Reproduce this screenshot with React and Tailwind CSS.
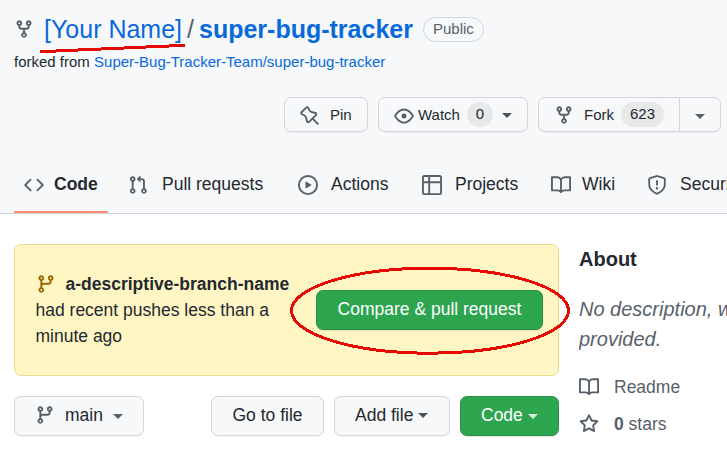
import React from 'react';

const paths = {
  fork: 'M5 3.25a.75.75 0 11-1.5 0 .75.75 0 011.5 0zm0 2.122a2.25 2.25 0 10-1.5 0v.878A2.25 2.25 0 005.75 8.5h1.5v2.128a2.251 2.251 0 101.5 0V8.5h1.5a2.25 2.25 0 002.25-2.25v-.878a2.25 2.25 0 10-1.5 0v.878a.75.75 0 01-.75.75h-4.5A.75.75 0 015 6.25v-.878zm3.75 7.378a.75.75 0 11-1.5 0 .75.75 0 011.5 0zm3-8.75a.75.75 0 100-1.5.75.75 0 000 1.5z',
  pin: 'M4.456.734a1.75 1.75 0 012.826.504l.613 1.327a3.081 3.081 0 002.084 1.707l2.454.584c1.332.317 1.8 1.972.832 2.94L11.06 10l3.72 3.72a.75.75 0 11-1.061 1.06L10 11.06l-2.204 2.205c-.968.968-2.623.5-2.94-.832l-.584-2.454a3.081 3.081 0 00-1.707-2.084l-1.327-.613a1.75 1.75 0 01-.504-2.826L4.456.734zM5.92 1.866a.25.25 0 00-.404-.072L1.794 5.516a.25.25 0 00.072.404l1.328.613A4.582 4.582 0 015.73 9.63l.584 2.454a.25.25 0 00.42.12l5.47-5.47a.25.25 0 00-.12-.42L9.63 5.73a4.581 4.581 0 01-3.098-2.537L5.92 1.866z',
  eye: 'M1.679 7.932c.412-.621 1.242-1.75 2.366-2.717C5.175 4.242 6.527 3.5 8 3.5c1.473 0 2.824.742 3.955 1.715 1.124.967 1.954 2.096 2.366 2.717a.119.119 0 010 .136c-.412.621-1.242 1.75-2.366 2.717C10.825 11.758 9.473 12.5 8 12.5c-1.473 0-2.824-.742-3.955-1.715C2.92 9.818 2.09 8.69 1.679 8.068a.119.119 0 010-.136zM8 2c-1.981 0-3.67.992-4.933 2.078C1.797 5.169.88 6.423.43 7.1a1.619 1.619 0 000 1.798c.45.678 1.367 1.932 2.637 3.024C4.329 13.008 6.019 14 8 14c1.981 0 3.67-.992 4.933-2.078 1.27-1.091 2.187-2.345 2.637-3.023a1.619 1.619 0 000-1.798c-.45-.678-1.367-1.932-2.637-3.023C11.671 2.992 9.981 2 8 2zm0 8a2 2 0 100-4 2 2 0 000 4z',
  code: 'M4.72 3.22a.75.75 0 011.06 1.06L2.06 8l3.72 3.72a.75.75 0 11-1.06 1.06L.47 8.53a.75.75 0 010-1.06l4.25-4.25zm6.56 0a.75.75 0 10-1.06 1.06L13.94 8l-3.72 3.72a.75.75 0 101.06 1.06l4.25-4.25a.75.75 0 000-1.06l-4.25-4.25z',
  pull: 'M7.177 3.073L9.573.677A.25.25 0 0110 .854v4.792a.25.25 0 01-.427.177L7.177 3.427a.25.25 0 010-.354zM3.75 2.5a.75.75 0 100 1.5.75.75 0 000-1.5zm-2.25.75a2.25 2.25 0 113 2.122v5.256a2.251 2.251 0 11-1.5 0V5.372A2.25 2.25 0 011.5 3.25zM11 2.5h-1V4h1a1 1 0 011 1v5.628a2.251 2.251 0 101.5 0V5A2.5 2.5 0 0011 2.5zm1 10.25a.75.75 0 111.5 0 .75.75 0 01-1.5 0zM3.75 12a.75.75 0 100 1.5.75.75 0 000-1.5z',
  play: 'M1.5 8a6.5 6.5 0 1113 0 6.5 6.5 0 01-13 0zM8 0a8 8 0 100 16A8 8 0 008 0zM6.379 5.227A.25.25 0 006 5.442v5.117a.25.25 0 00.379.214l4.264-2.559a.25.25 0 000-.428L6.379 5.227z',
  table: 'M0 1.75C0 .784.784 0 1.75 0h12.5C15.216 0 16 .784 16 1.75v12.5A1.75 1.75 0 0114.25 16H1.75A1.75 1.75 0 010 14.25V1.75zM1.5 6.5v7.75c0 .138.112.25.25.25H5v-8H1.5zM5 5H1.5V1.75a.25.25 0 01.25-.25H5V5zm1.5 1.5v8h7.75a.25.25 0 00.25-.25V6.5h-8zm8-1.5h-8V1.5h7.75a.25.25 0 01.25.25V5z',
  book: 'M0 1.75A.75.75 0 01.75 1h4.253c1.227 0 2.317.59 3 1.501A3.744 3.744 0 0111.006 1h4.245a.75.75 0 01.75.75v10.5a.75.75 0 01-.75.75h-4.507a2.25 2.25 0 00-1.591.659l-.622.621a.75.75 0 01-1.06 0l-.622-.621A2.25 2.25 0 005.258 13H.75a.75.75 0 01-.75-.75V1.75zm8.755 3a2.25 2.25 0 012.25-2.25H14.5v9h-3.757c-.71 0-1.4.201-1.992.572l.004-7.322zm-1.504 7.324l.004-5.073-.002-2.253A2.25 2.25 0 005.003 2.5H1.5v9h3.757a3.75 3.75 0 011.994.574z',
  shield: 'M7.467.133a1.75 1.75 0 011.066 0l5.25 1.68A1.75 1.75 0 0115 3.48V7c0 1.566-.32 3.182-1.303 4.682-.983 1.498-2.585 2.813-5.032 3.855a1.7 1.7 0 01-1.33 0c-2.447-1.042-4.049-2.357-5.032-3.855C1.32 10.182 1 8.566 1 7V3.48a1.75 1.75 0 011.217-1.667l5.25-1.68zm.61 1.429a.25.25 0 00-.153 0l-5.25 1.68a.25.25 0 00-.174.238V7c0 1.358.275 2.666 1.057 3.86.784 1.194 2.121 2.34 4.366 3.297a.2.2 0 00.154 0c2.245-.956 3.582-2.104 4.366-3.298C13.225 9.666 13.5 8.36 13.5 7V3.48a.25.25 0 00-.174-.237l-5.25-1.68zM9 10.5a1 1 0 11-2 0 1 1 0 012 0zm-.25-5.75a.75.75 0 10-1.5 0v3a.75.75 0 001.5 0v-3z',
  branch: 'M11.75 2.5a.75.75 0 100 1.5.75.75 0 000-1.5zm-2.25.75a2.25 2.25 0 113 2.122V6A2.5 2.5 0 0110 8.5H6a1 1 0 00-1 1v1.128a2.251 2.251 0 11-1.5 0V5.372a2.25 2.25 0 111.5 0v1.836A2.492 2.492 0 016 7h4a1 1 0 001-1v-.628A2.25 2.25 0 019.5 3.25zM4.25 12a.75.75 0 100 1.5.75.75 0 000-1.5zM3.5 3.25a.75.75 0 111.5 0 .75.75 0 01-1.5 0z',
  star: 'M8 .25a.75.75 0 01.673.418l1.882 3.815 4.21.612a.75.75 0 01.416 1.279l-3.046 2.97.719 4.192a.75.75 0 01-1.088.791L8 12.347l-3.766 1.98a.75.75 0 01-1.088-.79l.72-4.194L.818 6.374a.75.75 0 01.416-1.28l4.21-.611L7.327.668A.75.75 0 018 .25zm0 2.445L6.615 5.5a.75.75 0 01-.564.41l-3.097.45 2.24 2.184a.75.75 0 01.216.664l-.528 3.084 2.769-1.456a.75.75 0 01.698 0l2.77 1.456-.53-3.084a.75.75 0 01.216-.664l2.24-2.183-3.096-.45a.75.75 0 01-.564-.41L8 2.694v.001z',
};

function Icon({ name, className = 'text-[#57606a]' }) {
  return (
    <svg viewBox="0 0 16 16" width="20" height="20" fill="currentColor" fillRule="evenodd" className={`shrink-0 ${className}`}>
      <path d={paths[name]} />
    </svg>
  );
}

function Caret({ className = '' }) {
  return (
    <span className={`h-0 w-0 shrink-0 border-x-5 border-t-5 border-x-transparent ${className}`} />
  );
}

const buttonBase = 'flex shrink-0 items-center whitespace-nowrap rounded-[7px] border';
const grayButton = `${buttonBase} border-[#d3d6da] bg-[#f6f8fa] text-[#24292f] shadow-[0_1px_0_rgba(27,31,36,0.04)]`;
const greenButton = `${buttonBase} border-[#2b914a] bg-[#2da44e] text-white shadow-[0_1px_0_rgba(27,31,36,0.1)]`;

function Tab({ icon, label, className, gap = 'ml-[13px]' }) {
  return (
    <div className={`flex h-[53px] shrink-0 items-center pb-[6px] ${className}`}>
      <Icon name={icon} />
      <span className={gap}>{label}</span>
    </div>
  );
}

function Header() {
  return (
    <header className="h-[214px] overflow-hidden border-b border-[#d0d7de] bg-[#f6f8fa]">
      <div className="flex h-[50px] items-center pl-[14px] pt-[8px]">
        <Icon name="fork" />
        <span className="ml-[10px] text-[25px] leading-[38px] text-[#0969da]">[Your Name]</span>
        <span className="ml-[5px] text-[25px] leading-[38px] text-[#57606a]">/</span>
        <span className="ml-[5px] text-[25px] font-bold leading-[38px] text-[#0969da]">super-bug-tracker</span>
        <span className="ml-[10px] mt-[1px] flex h-[25px] w-[61px] items-center justify-center rounded-full border border-[#d0d7de] text-[15px] text-[#57606a]">
          Public
        </span>
      </div>
      <p className="h-[47px] pl-[14px] text-[15px] leading-[23px]">
        forked from <span className="text-[#0969da]">Super-Bug-Tracker-Team/super-bug-tracker</span>
      </p>
      <div className="flex gap-[10px] pl-[284px] text-[15px]">
        <div className={`${grayButton} h-[35px] w-[84px] pl-[15px]`}>
          <Icon name="pin" className="mt-[2px] text-[#57606a]" />
          <span className="ml-[10px] mt-[2px]">Pin</span>
        </div>
        <div className={`${grayButton} h-[35px] w-[150px] pl-[15px]`}>
          <Icon name="eye" className="mt-[2px] text-[#57606a]" />
          <span className="ml-[4px] mt-[2px]">Watch</span>
          <span className="ml-[7px] flex h-[25px] w-[26px] items-center justify-center rounded-full bg-[#e6e8ea]">0</span>
          <Caret className="ml-[9px] mt-[1px] border-t-[#4b5259]" />
        </div>
        <div className={`${grayButton} h-[35px] w-[183px] pl-[15px]`}>
          <Icon name="fork" className="mt-[1px] text-[#57606a]" />
          <span className="ml-[10px] mt-[2px]">Fork</span>
          <span className="ml-[7px] flex h-[25px] w-[43px] items-center justify-center rounded-full bg-[#e6e8ea]">623</span>
          <span className="ml-auto flex h-full w-[41px] items-center justify-center border-l border-[#d3d6da] pt-[4px]">
            <Caret className="border-t-[#57606a]" />
          </span>
        </div>
      </div>
      <nav className="mt-[29px] flex text-[17.5px] text-[#24292f]">
        <div className="ml-[14px] flex h-[53px] w-[94px] shrink-0 items-center border-b-3 border-[#fd8c73] pb-[3px] pl-[10px]">
          <Icon name="code" />
          <span className="ml-[10px] font-bold">Code</span>
        </div>
        <Tab icon="pull" label="Pull requests" gap="ml-[14px]" className="w-[170px] pl-[20px]" />
        <Tab icon="play" label="Actions" className="w-[124px] pl-[20px]" />
        <Tab icon="table" label="Projects" className="w-[129px] pl-[20px]" />
        <Tab icon="book" label="Wiki" gap="ml-[11px]" className="w-[96px] pl-[20px]" />
        <Tab icon="shield" label="Security" className="pl-[20px]" />
      </nav>
    </header>
  );
}

function Main() {
  return (
    <main className="flex pl-[14px] pt-[30px] text-[17.5px]">
      <section className="w-[545px] shrink-0">
        <div className="flex h-[132px] items-center rounded-[7px] border border-[#e8d98c] bg-[#fff6c4] pl-[20.5px]">
          <div className="w-[280.5px] shrink-0 leading-[26px]">
            <div className="flex items-center whitespace-nowrap">
              <Icon name="branch" className="text-[#9a6700]" />
              <strong className="ml-[10px]">a-descriptive-branch-name</strong>
            </div>
            <div>had recent pushes less than a</div>
            <div>minute ago</div>
          </div>
          <div className={`${greenButton} h-[40px] w-[227px] justify-center pb-[2px]`}>Compare &amp; pull request</div>
        </div>
        <div className="mt-[20px] flex">
          <div className={`${grayButton} h-[40px] w-[130px] pl-[20px]`}>
            <Icon name="branch" className="-mt-[2px] text-[#57606a]" />
            <span className="ml-[10px] -mt-[2px]">main</span>
            <Caret className="ml-[10px] border-t-[#57606a]" />
          </div>
          <div className={`${grayButton} ml-auto h-[40px] w-[113px] justify-center pb-[2px]`}>Go to file</div>
          <div className={`${grayButton} ml-[10px] h-[40px] w-[116px] pb-[2px] pl-[20px]`}>
            Add file
            <Caret className="ml-[5px] border-t-[#4b5259]" />
          </div>
          <div className={`${greenButton} ml-[10px] h-[40px] w-[99px] pb-[2px] pl-[20px]`}>
            Code
            <Caret className="ml-[5px] mt-[2px] border-t-[#d5edd9]" />
          </div>
        </div>
      </section>
      <aside className="ml-[20px] w-[148px] overflow-hidden whitespace-nowrap text-[#57606a]">
        <h2 className="text-[20px] font-bold leading-[30px] text-[#24292f]">About</h2>
        <p className="mt-[20px] text-[20px] italic leading-[30px]">
          No description, website
          <br />
          provided.
        </p>
        <div className="mt-[20px] flex h-[26px] items-center">
          <Icon name="book" />
          <span className="ml-[15px]">Readme</span>
        </div>
        <div className="mt-[11px] flex h-[26px] items-center">
          <Icon name="star" />
          <span className="ml-[15px]"><b>0</b> stars</span>
        </div>
      </aside>
    </main>
  );
}

export default function App() {
  return (
    <div className="relative h-[451px] w-[727px] overflow-hidden bg-white font-['Liberation_Sans',Arial,sans-serif] text-[#24292f]">
      <Header />
      <Main />
      <svg className="pointer-events-none absolute inset-0" width="727" height="451" fill="none" stroke="#e60a05" strokeWidth="3" shapeRendering="crispEdges">
        <path d="M40 51.7L185 45.3" />
        <ellipse cx="430" cy="310.7" rx="138.5" ry="42.5" />
      </svg>
    </div>
  );
}
